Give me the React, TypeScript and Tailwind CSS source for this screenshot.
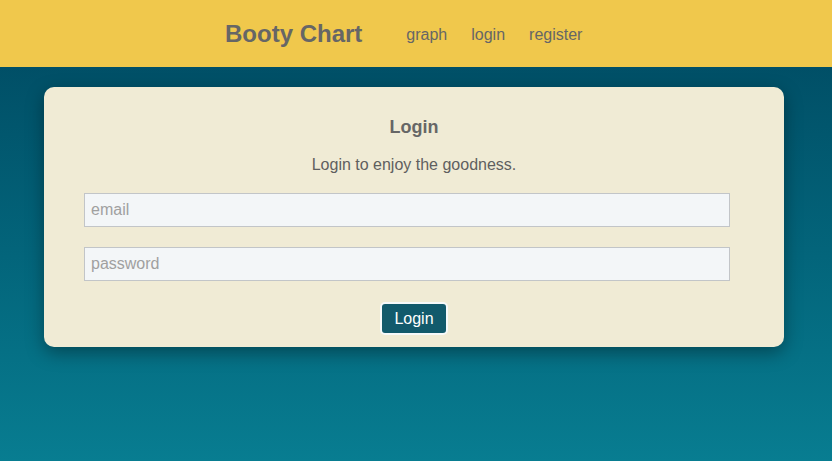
export default function App() {
  return (
    <div
      className="min-h-[461px] bg-gradient-to-b from-[#004860] to-[#087d91] text-[#666]"
      style={{ fontFamily: '"Liberation Sans", Arial, sans-serif' }}
    >
      <header className="h-[67px] bg-[#f0c84c] flex items-center">
        <div className="mx-auto w-[382px] flex items-center pt-[1px]">
          <span className="text-[24px] font-bold text-[#666] leading-none">Booty Chart</span>
          <nav className="ml-[44px] flex gap-[24px] text-[16px] text-[#666] pt-[2px]">
            <a>graph</a>
            <a>login</a>
            <a>register</a>
          </nav>
        </div>
      </header>

      <main className="pt-[20px] pb-[20px]">
        <div className="ml-[44px] w-[740px] rounded-[10px] bg-[#f0ebd5] pl-[40px] pr-[54px] pt-[28px] pb-[12px] shadow-[0_6px_18px_rgba(0,0,0,0.35)] flex flex-col items-center">
          <h1 className="ml-[14px] text-[18px] leading-[24px] font-bold text-[#666]">Login</h1>
          <p className="ml-[14px] mt-[16px] text-[16px] leading-[20px] text-[#5f5f5f]">Login to enjoy the goodness.</p>

          <input
            className="mt-[18px] w-full h-[34px] border border-[#c2c5c8] bg-[#f3f6f8] px-[6px] text-[16px] placeholder:text-[#a0a0a0] outline-none"
            placeholder="email"
          />
          <input
            type="password"
            className="mt-[20px] w-full h-[34px] border border-[#c2c5c8] bg-[#f3f6f8] px-[6px] text-[16px] placeholder:text-[#a0a0a0] outline-none"
            placeholder="password"
          />

          <button className="ml-[14px] mt-[21px] h-[33px] px-[12px] rounded-[5px] border-2 border-[#f6f9fa] bg-[#125a6c] text-white text-[16px] leading-none">
            Login
          </button>
        </div>
      </main>
    </div>
  );
}
